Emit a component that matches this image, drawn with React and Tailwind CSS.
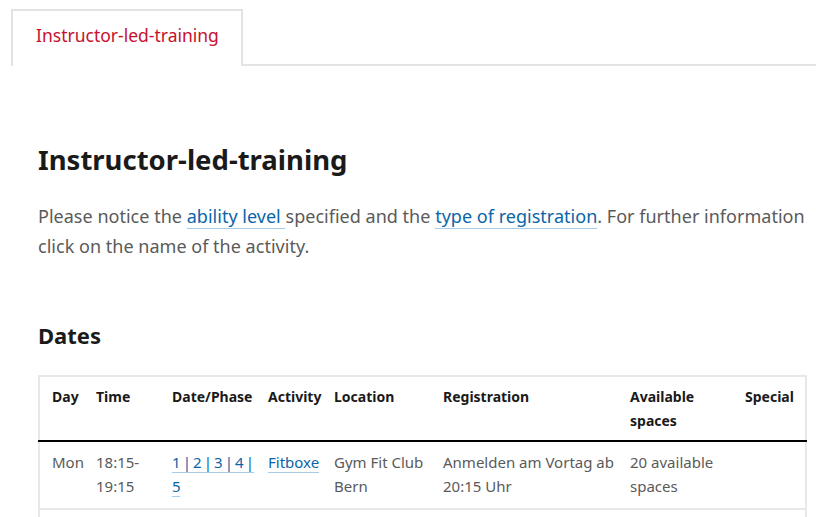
import React from 'react'

const font = { fontFamily: '"Noto Sans", "Open Sans", sans-serif' }

const columns = [
  { label: 'Day', w: 'w-[45px]' },
  { label: 'Time', w: 'w-[76px]' },
  { label: 'Date/Phase', w: 'w-[96px]' },
  { label: 'Activity', w: 'w-[66px]' },
  { label: 'Location', w: 'w-[109px]' },
  { label: 'Registration', w: 'w-[187px]' },
  { label: 'Available spaces', w: 'w-[115px]' },
  { label: 'Special', w: 'w-[73px]' },
]

const rows = [
  {
    day: 'Mon',
    time: '18:15-19:15',
    phases: ['1\u2009|\u20092\u2009|\u20093\u2009|\u20094\u2009|', '5'],
    activity: 'Fitboxe',
    location: 'Gym Fit Club Bern',
    registration: 'Anmelden am Vortag ab 20:15 Uhr',
    spaces: '20 available spaces',
  },
  {
    day: 'Tue',
    time: '12:15-13:00',
    phases: ['1\u2009|\u20092\u2009|\u20093'],
    activity: 'Pilates',
    location: 'Gym Fit Club Bern',
    registration: 'Anmelden am Vortag ab 20:15 Uhr',
    spaces: '15 available spaces',
  },
]

const Link = ({ children, className = '' }) => (
  <a href="#" className={`text-[#0a65a8] border-b border-[#a9cbe6] no-underline ${className}`}>
    {children}
  </a>
)

const cell = 'pl-[12px] pr-[4px] pt-[8px] pb-[10px] align-top'

export default function App() {
  return (
    <div className="w-[816px] h-[517px] overflow-hidden bg-white" style={font}>
      {/* Tabs */}
      <div className="flex pt-[9px] pl-[11px]">
        <div className="h-[57px] pl-[23px] pr-[22px] pt-[10px] border-t-2 border-l-2 border-r-2 border-[#e3e3e3] text-[17.5px] leading-[28px] text-[#c8102e]">
          Instructor-led-training
        </div>
        <div className="flex-1 border-b-2 border-[#e3e3e3]" />
      </div>

      <div className="pl-[38px] pr-[2px]">
        <h1 className="mt-[74px] text-[27.5px] leading-[40px] font-bold text-[#1a1a1a]">
          Instructor-led-training
        </h1>
        <p className="mt-[21px] text-[18px] leading-[30px] text-[#5a5a5a] tracking-[0.02px]">
          Please notice the <Link>ability level </Link>specified and the{' '}
          <Link>type of registration</Link>. For further information click on the name of the activity.
        </p>

        <h2 className="mt-[58px] text-[22px] leading-[32px] font-bold text-[#1a1a1a]">Dates</h2>

        <table className="mt-[24px] w-[768px] table-fixed border-collapse border-2 border-[#e8e8e8] text-[14px] leading-[24px]">
          <thead>
            <tr className="border-b-2 border-black">
              {columns.map((c) => (
                <th
                  key={c.label}
                  className={`${c.w} pl-[12px] pr-[4px] pt-[8px] pb-[7px] text-left align-top font-bold text-[#1a1a1a]`}
                >
                  {c.label}
                </th>
              ))}
            </tr>
          </thead>
          <tbody className="text-[#5a5a5a] text-[15px]">
            {rows.map((r) => (
              <tr key={r.day} className="border-b-2 border-[#e8e8e8]">
                <td className={cell}>{r.day}</td>
                <td className={cell}>{r.time}</td>
                <td className="pl-[12px] pr-0 pt-[8px] pb-[10px] align-top tracking-[-0.2px]">
                  {r.phases.map((p, i) => (
                    <React.Fragment key={p}>
                      {i > 0 && ' '}
                      <Link className="whitespace-nowrap">{p}</Link>
                    </React.Fragment>
                  ))}
                </td>
                <td className={cell}>
                  <Link>{r.activity}</Link>
                </td>
                <td className={cell}>{r.location}</td>
                <td className={cell}>{r.registration}</td>
                <td className={cell}>{r.spaces}</td>
                <td className={cell}></td>
              </tr>
            ))}
          </tbody>
        </table>
      </div>
    </div>
  )
}
